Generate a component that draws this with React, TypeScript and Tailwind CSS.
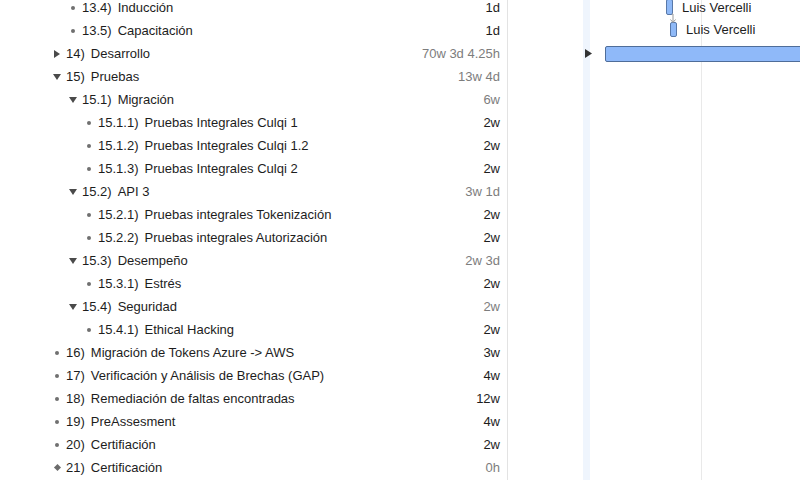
import React from "react";

type Row = {
  level: 0 | 1 | 2;
  icon: "dot" | "right" | "down" | "diamond";
  num: string;
  name: string;
  dur: string;
  summary?: boolean;
};

const rows: Row[] = [
  { level: 1, icon: "dot", num: "13.4)", name: "Inducción", dur: "1d" },
  { level: 1, icon: "dot", num: "13.5)", name: "Capacitación", dur: "1d" },
  { level: 0, icon: "right", num: "14)", name: "Desarrollo", dur: "70w 3d 4.25h", summary: true },
  { level: 0, icon: "down", num: "15)", name: "Pruebas", dur: "13w 4d", summary: true },
  { level: 1, icon: "down", num: "15.1)", name: "Migración", dur: "6w", summary: true },
  { level: 2, icon: "dot", num: "15.1.1)", name: "Pruebas Integrales Culqi 1", dur: "2w" },
  { level: 2, icon: "dot", num: "15.1.2)", name: "Pruebas Integrales Culqi 1.2", dur: "2w" },
  { level: 2, icon: "dot", num: "15.1.3)", name: "Pruebas Integrales Culqi 2", dur: "2w" },
  { level: 1, icon: "down", num: "15.2)", name: "API 3", dur: "3w 1d", summary: true },
  { level: 2, icon: "dot", num: "15.2.1)", name: "Pruebas integrales Tokenización", dur: "2w" },
  { level: 2, icon: "dot", num: "15.2.2)", name: "Pruebas integrales Autorización", dur: "2w" },
  { level: 1, icon: "down", num: "15.3)", name: "Desempeño", dur: "2w 3d", summary: true },
  { level: 2, icon: "dot", num: "15.3.1)", name: "Estrés", dur: "2w" },
  { level: 1, icon: "down", num: "15.4)", name: "Seguridad", dur: "2w", summary: true },
  { level: 2, icon: "dot", num: "15.4.1)", name: "Ethical Hacking", dur: "2w" },
  { level: 0, icon: "dot", num: "16)", name: "Migración de Tokens Azure -> AWS", dur: "3w" },
  { level: 0, icon: "dot", num: "17)", name: "Verificación y Análisis de Brechas (GAP)", dur: "4w" },
  { level: 0, icon: "dot", num: "18)", name: "Remediación de faltas encontradas", dur: "12w" },
  { level: 0, icon: "dot", num: "19)", name: "PreAssesment", dur: "4w" },
  { level: 0, icon: "dot", num: "20)", name: "Certifiación", dur: "2w" },
  { level: 0, icon: "diamond", num: "21)", name: "Certificación", dur: "0h", summary: true },
];

const indent = ["pl-[49px]", "pl-[65px]", "pl-[81px]"];

function RowIcon({ kind }: { kind: Row["icon"] }) {
  if (kind === "dot") return <span className="block h-[4px] w-[4px] rounded-full bg-[#707070]" />;
  if (kind === "diamond") return <span className="block h-[5px] w-[5px] rotate-45 bg-[#6b6b6b]" />;
  if (kind === "right")
    return (
      <svg width="6" height="8" viewBox="0 0 6 8">
        <path d="M0 0 L6 4 L0 8 Z" fill="#4a4a4a" />
      </svg>
    );
  return (
    <svg width="8" height="6" viewBox="0 0 8 6">
      <path d="M0 0 L8 0 L4 6 Z" fill="#4a4a4a" />
    </svg>
  );
}

export default function App() {
  return (
    <div
      className="flex h-[480px] w-[800px] overflow-hidden bg-white text-[13px] text-[#1d1d1d]"
      style={{ fontFamily: '"Liberation Sans", Arial, sans-serif' }}
    >
      {/* outline */}
      <div className="w-[508px] shrink-0 border-r border-[#e3e3e3]">
        <div className="-mt-[4px]">
          {rows.map((r) => (
            <div key={r.num} className={`flex h-[23px] items-center pr-[7px] ${indent[r.level]}`}>
              <span className="flex w-[16px] items-center justify-center">
                <RowIcon kind={r.icon} />
              </span>
              <span className="ml-[1px] whitespace-nowrap">{r.num}</span>
              <span className="ml-[6px] whitespace-nowrap">{r.name}</span>
              <span className={`ml-auto whitespace-nowrap ${r.summary ? "text-[#7d7d7d]" : ""}`}>{r.dur}</span>
            </div>
          ))}
        </div>
      </div>

      {/* gantt */}
      <div className="relative flex flex-1">
        <div className="w-[75px] shrink-0" />
        <div className="w-[7px] shrink-0 bg-[#eff5fd]" />
        <div className="ml-[111px] w-px shrink-0 bg-[#e9e9e9]" />

        <div className="absolute left-[158px] top-[-1px] h-[16px] w-[7px] rounded-[2px] border border-[#5878a8] bg-[#8fb9f7]" />
        <div className="absolute left-[162px] top-[22px] h-[15px] w-[7px] rounded-[2px] border border-[#5878a8] bg-[#8fb9f7]" />
        <svg className="absolute left-[160px] top-[13px]" width="12" height="11" viewBox="0 0 12 11">
          <path d="M4 1 L5 1 L5 9" stroke="#9a9a9a" strokeWidth="1" fill="none" />
          <path d="M2.5 6.5 L5 9.5 L7.5 6.5" stroke="#9a9a9a" strokeWidth="1" fill="none" />
        </svg>
        <span className="absolute left-[174px] top-[-1px] whitespace-nowrap leading-[18px]">Luis Vercelli</span>
        <span className="absolute left-[178px] top-[21px] whitespace-nowrap leading-[18px]">Luis Vercelli</span>

        <svg className="absolute left-[77px] top-[49px]" width="7" height="9" viewBox="0 0 7 9">
          <path d="M0 0 L7 4.5 L0 9 Z" fill="#333333" />
        </svg>
        <div className="absolute left-[97px] top-[46px] h-[16px] w-[300px] rounded-l-[2px] border border-[#4f6d99] bg-[#8fb9f9]" />
      </div>
    </div>
  );
}
